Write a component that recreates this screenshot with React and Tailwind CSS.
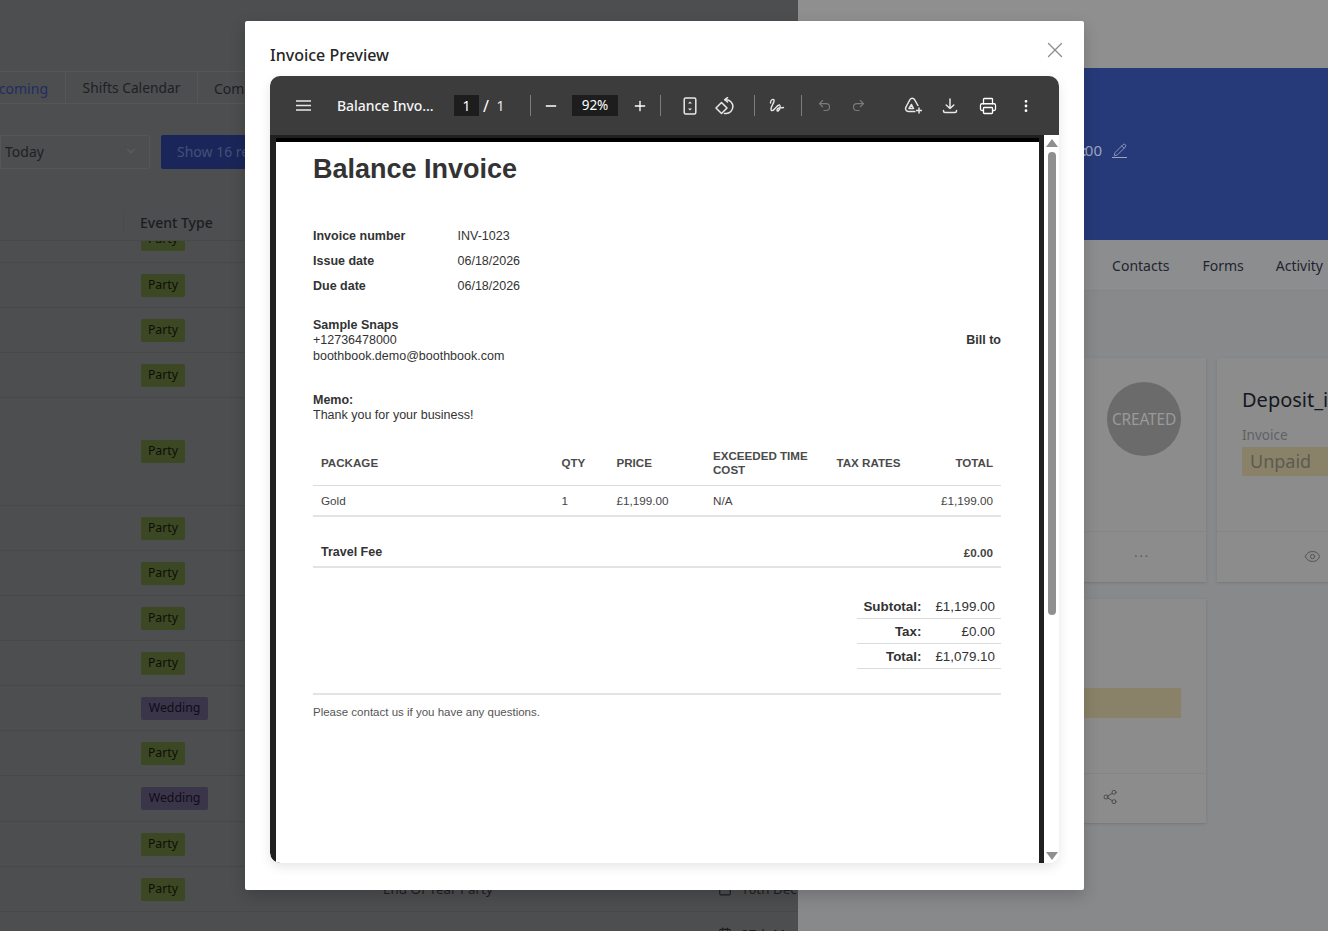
import React from "react";
import { X, Minus, Plus, Undo2, Redo2, Printer, EllipsisVertical, Pencil, Eye, Share2, ChevronDown, Calendar } from "lucide-react";

const ui = "font-['Noto_Sans','Open_Sans',sans-serif]";

function Badge({ kind }) {
  return kind === "w" ? (
    <span className="rounded-[2px] bg-[#3b3549] h-[23px] w-[67px] flex items-center justify-center text-[12.3px] text-[#0e0c1a]">Wedding</span>
  ) : (
    <span className="rounded-[2px] bg-[#3c4723] h-[23px] w-[44px] flex items-center justify-center text-[12.3px] text-[#0c0f06]">Party</span>
  );
}

function Row({ h = 45, kind, name, date }) {
  return (
    <div style={{ height: h }} className="flex items-center border-b border-[#47484a] shrink-0">
      <div className="w-[141px] shrink-0" />
      <div className="w-[242px] shrink-0">{kind && <Badge kind={kind} />}</div>
      <div className="w-[335px] shrink-0 text-[13.4px] text-[#1d1e21] whitespace-nowrap">{name}</div>
      {date && (
        <div className="flex items-center gap-[9px] text-[13.4px] text-[#1d1e21] whitespace-nowrap shrink-0"><Calendar size={14} />{date}</div>
      )}
    </div>
  );
}

function Background() {
  const rows = [
    [46, "p"], [45, "p"], [45, "p"], [45, "p"], [108, "p"], [45, "p"], [45, "p"], [45, "p"], [45, "p"], [45, "w"], [45, "p"], [46, "w"], [45, "p"],
  ];
  return (
    <div className={`flex h-[931px] w-full overflow-hidden ${ui}`}>
      <div className="w-[798px] shrink-0 h-full bg-[#4d4e50] overflow-hidden flex flex-col">
        <div className="h-[71px] shrink-0" />
        <div className="flex h-[33px] shrink-0 border-y border-[#555658] text-[14px] items-center">
          <div className="w-[66px] shrink-0 h-full border-r border-[#555658] flex items-center justify-end pr-[17px] pt-[1px] text-[#1f2d63]">coming</div>
          <div className="w-[132px] shrink-0 h-full border-r border-[#555658] flex items-center justify-center pt-[1px] text-[#1f2023] text-[13.8px]">Shifts Calendar</div>
          <div className="pl-4 pt-[1px] text-[#1f2023]">Completed</div>
        </div>
        <div className="h-[31px] shrink-0" />
        <div className="flex gap-[11px] shrink-0 h-[34px]">
          <div className="w-[150px] shrink-0 border border-[#555658] rounded-r-[2px] flex items-center justify-between pl-[4px] pr-[11px] pb-[2px] text-[14px] text-[#1f2023]">
            Today <ChevronDown size={14} className="text-[#5c5d5f]" />
          </div>
          <div className="w-[200px] bg-[#1a2659] rounded-[2px] flex items-center pl-4 pb-[2px] text-[14px] text-[#44507a]">Show 16 results</div>
        </div>
        <div className="h-[36px] shrink-0" />
        <div className="h-[36px] shrink-0 flex items-center border-b border-[#47484a] z-10 bg-[#4d4e50]">
          <div className="w-[124px] h-[23px] border-r border-[#484a4c] shrink-0" />
          <div className="pl-4 text-[14px] font-medium text-[#1b1c1f]">Event Type</div>
        </div>
        <div className="flex-1 overflow-hidden flex flex-col -mt-[24px]">
          {rows.map(([h, k], i) => (
            <Row key={i} h={h} kind={k} />
          ))}
          <Row h={45} kind="p" name="End Of Year Party" date="10th Dec" />
          <Row h={45} date="27th M" />
        </div>
      </div>
      <div className="flex-1 h-full bg-[#88898b] overflow-hidden flex flex-col">
        <div className="h-[68px] shrink-0 bg-[#8f8f8f]" />
        <div className="h-[172px] shrink-0 bg-[#263a7a] flex items-center justify-end text-[15px] text-[#9ea5bd] pr-[201px] pb-[8px] gap-[10px]">
          <span>20<span className="-mr-[2px]">:</span>00</span>
          <span className="flex flex-col items-center border-b border-[#9ea5bd] w-[15px]"><Pencil size={14} strokeWidth={1.4} /></span>
        </div>
        <div className="h-[51px] shrink-0 bg-[#8c8d8e] border-b border-[#848587] flex items-center justify-end gap-[32px] text-[14px] text-[#1f2530] pr-[5px]">
          <span className="mr-[1px]">Contacts</span><span>Forms</span><span>Activity</span>
        </div>
        <div className="h-[67px] shrink-0" />
        <div className="flex gap-[11px] h-[224px] shrink-0 pl-[72px]">
          <div className="w-[336px] shrink-0 bg-[#8c8c8c] flex flex-col shadow-sm">
            <div className="h-[174px] border-b border-[#858585] flex justify-end pt-6 pr-[25px]">
              <div className="size-[74px] rounded-full bg-[#6b6b6b] flex items-center justify-center pt-[2px] text-[15.5px] tracking-[-0.2px] text-[#9a9a9a]">CREATED</div>
            </div>
            <div className="flex-1 flex items-center justify-end pr-[56px] text-[#555] text-[12px] tracking-[2px] pb-2">...</div>
          </div>
          <div className="w-[336px] shrink-0 bg-[#8c8c8c] flex flex-col shadow-sm">
            <div className="h-[174px] border-b border-[#858585] pt-[27px] pl-[25px]">
              <div className="text-[20px] leading-[30px] text-[#15181f] whitespace-nowrap">Deposit_invoice</div>
              <div className="text-[13.5px] leading-[18px] mt-[11px] text-[#5f6166]">Invoice</div>
              <div className="h-[29px] mt-[3px] bg-[#8a8268] flex items-center pl-2 text-[18px] text-[#5b5a52]">Unpaid</div>
            </div>
            <div className="flex-1 flex items-center pl-[87px] pb-[1px] text-[#4f4f4f]"><Eye size={17} strokeWidth={1.3} /></div>
          </div>
        </div>
        <div className="h-[17px] shrink-0" />
        <div className="flex h-[224px] shrink-0 pl-[72px]">
          <div className="w-[336px] shrink-0 bg-[#8c8c8c] flex flex-col shadow-sm">
            <div className="h-[175px] border-b border-[#858585] pt-[89px] pr-[25px]">
              <div className="h-[30px] bg-[#8a8268]" />
            </div>
            <div className="flex-1 flex items-center pl-[232px] pb-[3px] text-[#444]"><Share2 size={16} strokeWidth={1.3} /></div>
          </div>
        </div>
      </div>
    </div>
  );
}

function Field({ label, value }) {
  return (
    <div className="flex h-[25px] items-center">
      <div className="w-[144.5px] font-bold">{label}</div>
      <div>{value}</div>
    </div>
  );
}

function Sep({ className = "" }) {
  return <span className={`w-px h-[21px] bg-[#7d7d7d] shrink-0 ${className}`} />;
}

function Toolbar() {
  return (
    <div className={`h-[59px] shrink-0 bg-[#3c3c3c] rounded-t-[10px] flex items-center text-white ${ui}`}>
      <svg className="ml-[26px] shrink-0" width="15" height="11" viewBox="0 0 15 11" stroke="#e8e8e8" strokeWidth="1.3">
        <path d="M0 1h15M0 5.5h15M0 10h15" />
      </svg>
      <span className="ml-[26px] w-[117px] shrink-0 text-[14px] font-medium text-[#f4f4f4] tracking-[-0.05px] whitespace-nowrap">Balance Invo...</span>
      <span className="w-[25px] h-[21px] bg-[#1d1d1d] flex items-center justify-center text-[14px] shrink-0">1</span>
      <span className="w-[14px] text-center text-[16px] shrink-0">/</span>
      <span className="w-[15px] text-center text-[14px] text-[#e8e8e8] shrink-0">1</span>
      <Sep className="ml-[22px]" />
      <Minus size={16} className="ml-[12px] shrink-0" />
      <span className="ml-[13px] w-[46px] h-[21px] bg-[#1d1d1d] flex items-center justify-center text-[13.5px] shrink-0">92%</span>
      <Plus size={16} className="ml-[14px] shrink-0" />
      <Sep className="ml-[12px]" />
      <svg className="ml-[22px] shrink-0" width="14" height="18" viewBox="0 0 14 18" fill="none" stroke="#e8e8e8" strokeWidth="1.5">
        <rect x="1.2" y="1" width="11.6" height="16" rx="1.5" />
        <path d="M5 6.5 7 4.5 9 6.5Z" fill="#e8e8e8" stroke="none" />
        <path d="M5 11.5 7 13.5 9 11.5Z" fill="#e8e8e8" stroke="none" />
      </svg>
      <svg className="ml-[18px] shrink-0" width="19" height="18" viewBox="0 0 19 18" fill="none" stroke="#e8e8e8" strokeWidth="1.5" strokeLinejoin="round" strokeLinecap="round">
        <path d="M1 11 6.5 5.5 12 11 6.5 16.5Z" />
        <path d="M10 2.7h1a6.8 6.8 0 0 1 0 13.8H9.5" />
        <path d="M12.5 .7 9.8 2.7 12.5 5" />
      </svg>
      <Sep className="ml-[20px]" />
      <svg className="ml-[14px] shrink-0" width="16" height="15" viewBox="0 0 16 15" fill="none" stroke="#e8e8e8" strokeWidth="1.4" strokeLinecap="round" strokeLinejoin="round">
        <path d="M1.5 5C1.5 2 4 .5 5 2 6 4 2 8 2 11c0 2.5 2 2 4-.5C8 8 9 6.5 10.5 7 12 8 11 12 9 13c-1.5.5-1.5-2.5 1-3 1.5-.2 3 0 4.5-.5" />
      </svg>
      <Sep className="ml-[16px]" />
      <Undo2 size={15} className="ml-[15px] text-[#7b7b7b] shrink-0" strokeWidth={1.8} />
      <Redo2 size={15} className="ml-[19px] text-[#7b7b7b] shrink-0" strokeWidth={1.8} />
      <svg className="ml-[38px] shrink-0" width="19" height="17" viewBox="0 0 19 17" fill="none" stroke="#e8e8e8" strokeWidth="1.5" strokeLinejoin="round">
        <path d="M11.5 14.5H4.5C2 14.5 .8 12 2 10L6 2.5c1-1.8 3.4-1.8 4.5 0l3.7 6.5" />
        <path d="M5 11.5h4.5L7.5 7.5Z" />
        <path d="M15 10.5v6M12 13.5h6" />
      </svg>
      <svg className="ml-[19px] shrink-0" width="16" height="16" viewBox="0 0 16 16" fill="none" stroke="#e8e8e8" strokeWidth="1.5" strokeLinecap="round" strokeLinejoin="round">
        <path d="M8 1v9.5M4.2 7 8 10.5 11.8 7" />
        <path d="M1.5 12.5v.5A1.5 1.5 0 0 0 3 14.5h10a1.5 1.5 0 0 0 1.5-1.5v-.5" />
      </svg>
      <Printer size={18} className="ml-[21px] shrink-0" strokeWidth={1.7} />
      <EllipsisVertical size={16} className="ml-[21px] shrink-0" strokeWidth={2.2} />
    </div>
  );
}

function Invoice() {
  const th = "text-[11.6px] font-bold text-[#4a4a4a] leading-[14px]";
  return (
    <div className="flex-1 min-h-0 flex bg-[#fdfdfd] rounded-b-[10px] overflow-hidden">
      <div className="w-[774px] shrink-0 h-full bg-[#202020] pt-[3px] px-[6px] pr-[5px] rounded-bl-[10px] overflow-hidden">
        <div className="bg-white h-full border-t-4 border-black pl-[37px] pr-[38px] font-['Liberation_Sans',Arial,sans-serif] text-[#333] text-[12.5px] leading-[15.25px]">
          <h1 className="text-[27px] font-bold leading-[33px] pt-[11px] text-[#333]">Balance Invoice</h1>
          <div className="mt-[38px]">
            <Field label="Invoice number" value="INV-1023" />
            <Field label="Issue date" value="06/18/2026" />
            <Field label="Due date" value="06/18/2026" />
          </div>
          <div className="flex justify-between items-center mt-[19px]">
            <div>
              <div className="font-bold">Sample Snaps</div>
              <div>+12736478000</div>
              <div>boothbook.demo@boothbook.com</div>
            </div>
            <div className="font-bold">Bill to</div>
          </div>
          <div className="mt-[29px]">
            <div className="font-bold">Memo:</div>
            <div>Thank you for your business!</div>
          </div>
          <div className="mt-[18px] h-[45px] border-b border-[#dcdcdc] flex items-center px-2">
            <div className={`${th} w-[240.5px]`}>PACKAGE</div>
            <div className={`${th} w-[55px]`}>QTY</div>
            <div className={`${th} w-[96.5px]`}>PRICE</div>
            <div className={`${th} w-[123.5px]`}>EXCEEDED TIME<br />COST</div>
            <div className={`${th} w-[100px]`}>TAX RATES</div>
            <div className={`${th} flex-1 text-right`}>TOTAL</div>
          </div>
          <div className="h-[31px] border-b-2 border-[#e3e3e3] flex items-center px-2 text-[11.7px] text-[#444]">
            <div className="w-[240.5px]">Gold</div>
            <div className="w-[55px]">1</div>
            <div className="w-[96.5px]">£1,199.00</div>
            <div className="w-[123.5px]">N/A</div>
            <div className="w-[100px]" />
            <div className="flex-1 text-right">£1,199.00</div>
          </div>
          <div className="h-[51px] border-b-2 border-[#e3e3e3] flex items-center justify-between px-2 pt-[22px]">
            <span className="font-bold text-[12.5px]">Travel Fee</span>
            <span className="font-bold text-[11.7px] text-[#444]">£0.00</span>
          </div>
          <div className="ml-auto w-[144px] mt-[26px] text-[13.4px]">
            <div className="h-[25px] border-b border-[#dcdcdc] flex items-center justify-end pr-[6px]"><b className="mr-[14px]">Subtotal:</b><span>£1,199.00</span></div>
            <div className="h-[25px] border-b border-[#dcdcdc] flex items-center justify-end pr-[6px]"><b className="mr-[40px]">Tax:</b><span>£0.00</span></div>
            <div className="h-[25px] border-b border-[#dcdcdc] flex items-center justify-end pr-[6px]"><b className="mr-[14px]">Total:</b><span>£1,079.10</span></div>
          </div>
          <div className="mt-[24px] border-t-2 border-[#e3e3e3] pt-[10px] text-[11.5px] text-[#555]">Please contact us if you have any questions.</div>
        </div>
      </div>
      <div className="w-[15px] shrink-0 h-full bg-white flex flex-col items-center pt-[4px] pb-[3px]">
        <span className="w-0 h-0 border-x-[6px] border-x-transparent border-b-[8px] border-b-[#8f8f8f]" />
        <div className="w-[8px] h-[463px] mt-[5px] rounded-full bg-[#8f8f8f] shrink-0" />
        <div className="flex-1" />
        <span className="w-0 h-0 border-x-[6px] border-x-transparent border-t-[8px] border-t-[#8f8f8f]" />
      </div>
    </div>
  );
}

function Modal() {
  return (
    <div className="absolute z-20 left-[245px] top-[21px] w-[839px] h-[869px] bg-white rounded-[2px] shadow-[0_6px_16px_rgba(0,0,0,0.18)] flex flex-col px-[25px]">
      <div className="flex items-start justify-between h-[55px] shrink-0">
        <span className={`mt-[22px] text-[16px] leading-6 font-medium text-[#262626] ${ui}`}>Invoice Preview</span>
        <X size={26} strokeWidth={1.15} className="text-[#8c8c8c] mt-[16px] -mr-[9px]" />
      </div>
      <div className="h-[787px] shrink-0 flex flex-col rounded-[10px] shadow-[0_4px_12px_rgba(0,0,0,0.1)]">
        <Toolbar />
        <Invoice />
      </div>
    </div>
  );
}

export default function App() {
  return (
    <div className="relative w-[1328px] h-[931px] overflow-hidden">
      <Background />
      <Modal />
    </div>
  );
}
